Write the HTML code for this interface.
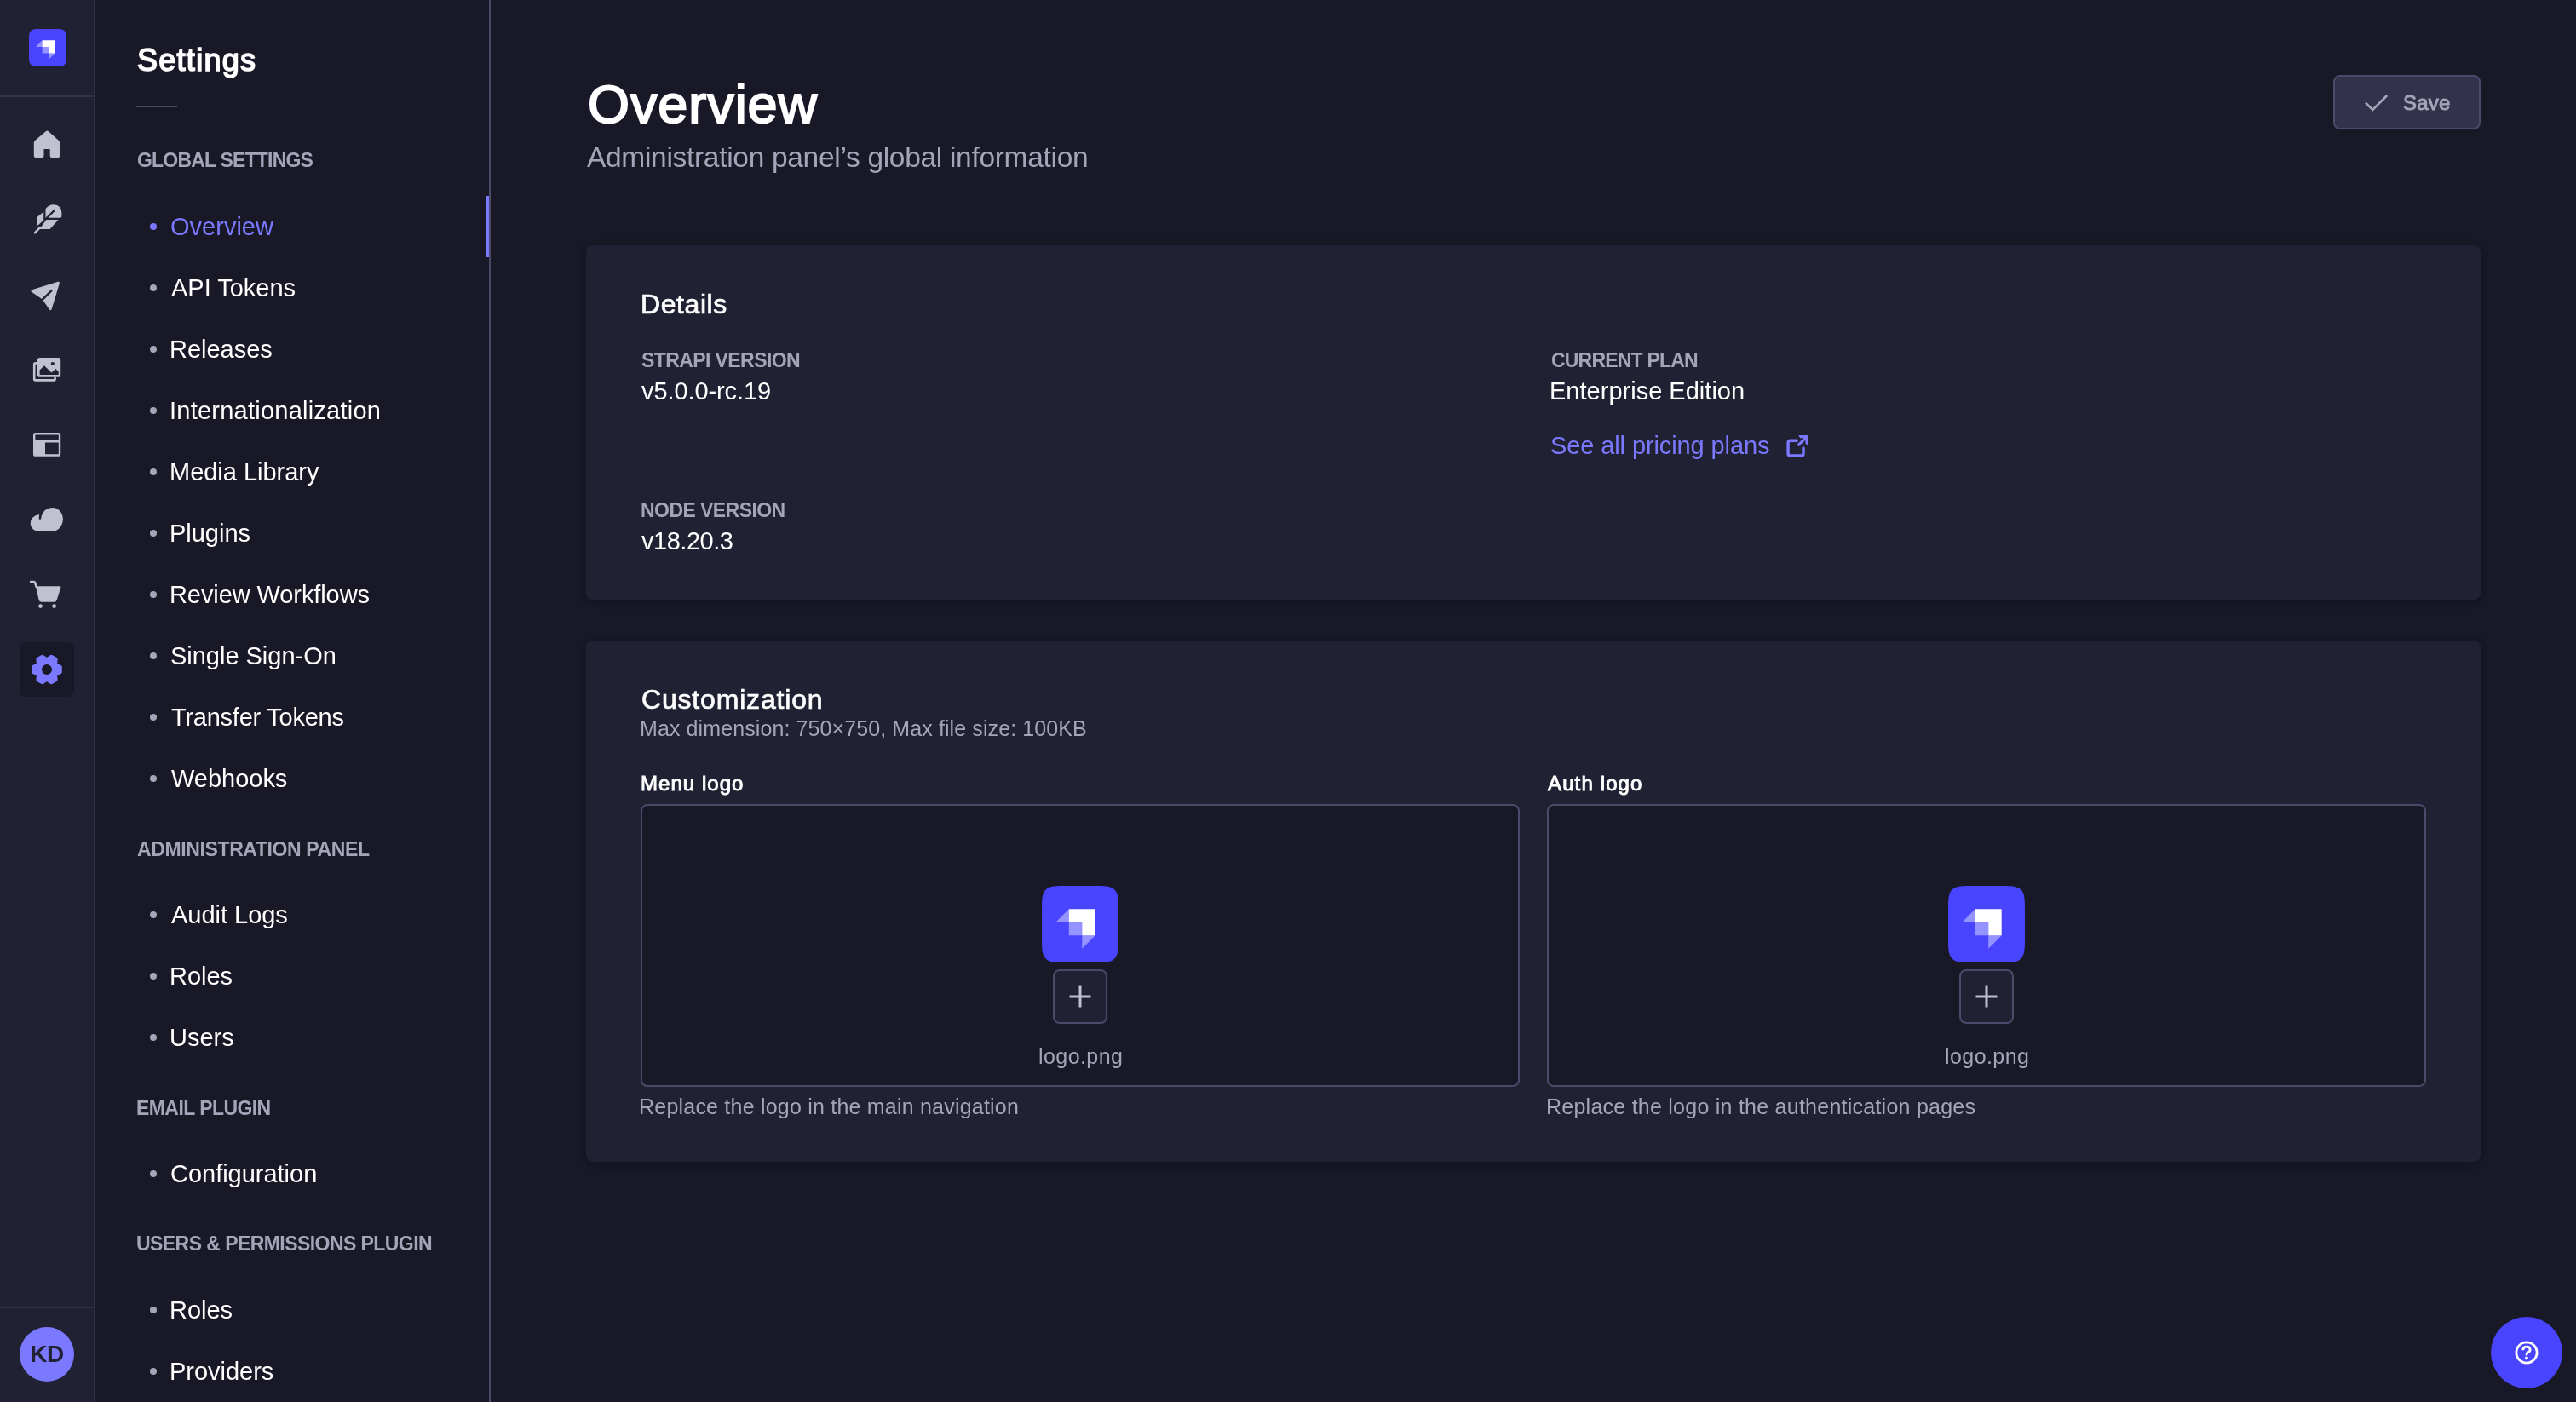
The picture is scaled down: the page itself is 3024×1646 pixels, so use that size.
<!DOCTYPE html>
<html><head><meta charset="utf-8"><title>Overview</title>
<style>
html,body{margin:0;padding:0;width:3024px;height:1646px;overflow:hidden;background:#181826;font-family:"Liberation Sans",sans-serif;}
.t{position:absolute;white-space:nowrap;line-height:1;will-change:transform;}
.abs{position:absolute;}
#mainnav{position:absolute;left:0;top:0;width:110px;height:1646px;background:#212134;border-right:2px solid #32324d;}
#subnav{position:absolute;left:112px;top:0;width:462px;height:1646px;background:#181826;border-right:2px solid #4a4a6a;}
.card{position:absolute;background:#212134;border-radius:8px;box-shadow:0 2px 8px rgba(10,10,20,0.35);}
.dot{position:absolute;width:8px;height:8px;border-radius:50%;background:#a5a5ba;}
.drop{position:absolute;box-sizing:border-box;border:2px solid #4a4a6a;border-radius:8px;background:#181826;}
.plus{position:absolute;box-sizing:border-box;width:64px;height:64px;border:2px solid #4a4a6a;border-radius:8px;background:#212134;}
@media (max-width:1600px){html{zoom:0.5;}}
</style></head><body>
<div id="mainnav"></div>
<div id="subnav"></div>
<!-- nav header divider -->
<div class="abs" style="left:0;top:112px;width:110px;height:2px;background:#32324d"></div>
<div class="abs" style="left:0;top:1534px;width:110px;height:2px;background:#32324d"></div>
<!-- logo -->
<svg class="abs" style="left:34px;top:34px" width="44" height="44" viewBox="0 0 32 32"><path fill="#4945FF" d="M0 11.093c0-5.23 0-7.844 1.625-9.468C3.249 0 5.864 0 11.093 0h9.814c5.23 0 7.844 0 9.468 1.625C32 3.249 32 5.864 32 11.093v9.814c0 5.23 0 7.844-1.625 9.468C28.751 32 26.136 32 20.907 32h-9.814c-5.23 0-7.844 0-9.468-1.625C0 28.751 0 26.136 0 20.907v-9.814Z"/><path fill="#fff" d="M11.307 9.707H22.293V20.693H16.8V15.2H11.307Z"/><path fill="#fff" opacity=".42" d="M11.307 9.707V15.2H5.813Z M16.8 20.693H22.293L16.8 26.187Z M11.307 15.2H16.8V20.693H11.307Z"/></svg>
<!-- active settings box -->
<div class="abs" style="left:23px;top:754px;width:64px;height:64px;border-radius:8px;background:#181826"></div>
<svg class="abs" style="left:0;top:0" width="110" height="900" viewBox="0 0 110 900">
<!-- home -->
<path fill="#c0c0cf" d="M55.4 153.5 Q56.2 153.5 57 154.2 L69 165 Q70.2 166.2 70.2 167.8 L70.2 182.6 Q70.2 185.2 67.6 185.2 L61.2 185.2 Q58.7 185.2 58.7 182.6 L58.7 175 L51.5 175 L51.5 182.6 Q51.5 185.2 49 185.2 L42.4 185.2 Q39.8 185.2 39.8 182.6 L39.8 167.8 Q39.8 166.2 41 165 L53.8 154.2 Q54.6 153.5 55.4 153.5Z"/>
<!-- feather -->
<path fill="#c0c0cf" d="M53.5 245.2 Q57.5 240.2 62.8 240.2 Q72.4 240.6 72.4 250 L72.4 254 Q72.4 255.7 70.7 255.7 L53.5 255.7 Z"/>
<path fill="none" stroke="#212134" stroke-width="2.3" stroke-linecap="round" d="M53.6 257.2 L63.8 247"/>
<path fill="#c0c0cf" d="M51.2 248.8 L51.2 258.4 L44.6 264.4 Q43.7 265 43.7 264 L43.7 254.8 Z"/>
<path fill="#c0c0cf" d="M54.3 258 L68.5 258 L58.6 269.1 L46.4 269.1 Z"/>
<path fill="none" stroke="#c0c0cf" stroke-width="2.5" stroke-linecap="round" d="M40.9 273.3 L47 267.2"/>
<!-- send -->
<path fill="#c0c0cf" stroke="#c0c0cf" stroke-width="3" stroke-linejoin="round" d="M68.4 332.2 L37.9 341.6 L51 350.6 L59.2 362.6 Z"/>
<path fill="none" stroke="#212134" stroke-width="2.4" stroke-linecap="round" d="M49.2 352.4 L60.6 341.2"/>
<!-- images -->
<path fill="none" stroke="#c0c0cf" stroke-width="2.6" d="M43.2 426.4 L41.5 426.4 Q40.2 426.4 40.2 427.8 L40.2 445 Q40.2 446.4 41.6 446.4 L63.2 446.4 Q64.6 446.4 64.6 445 L64.6 443"/>
<path fill="#c0c0cf" fill-rule="evenodd" d="M46.6 420 L68.6 420 Q71.2 420 71.2 422.6 L71.2 440.2 Q71.2 442.8 68.6 442.8 L46.6 442.8 Q44 442.8 44 440.2 L44 422.6 Q44 420 46.6 420 Z M46.6 434.4 L46.6 440 L68.7 440 L68.7 436.6 L65.4 433 L60.4 437.4 L52 429.2 Z"/>
<circle cx="61.8" cy="427" r="2.1" fill="#212134"/>
<!-- layout -->
<path fill="#c0c0cf" fill-rule="evenodd" d="M41.6 508 L68.6 508 Q71.2 508 71.2 510.6 L71.2 533.2 Q71.2 535.8 68.6 535.8 L41.6 535.8 Q39 535.8 39 533.2 L39 510.6 Q39 508 41.6 508 Z M41.4 510.6 L41.4 516.8 L68.8 516.8 L68.8 510.6 Z M53 519.4 L53 533.2 L68.8 533.2 L68.8 519.4 Z"/>
<!-- cloud -->
<path fill="#c0c0cf" d="M46.2 604.2 Q45.6 607 45.8 609.6 Q47 610 48 609.4 Q49 600 57.5 596.6 Q66 594 71.4 601.2 Q76 608.5 72.2 616.6 Q68.8 623.6 61 623.9 L45.6 623.9 Q38.6 623.5 36.2 617.5 Q34.6 611.5 38.8 607.2 Q42 604.3 46.2 604.2 Z"/>
<!-- cart -->
<path fill="none" stroke="#c0c0cf" stroke-width="2.6" stroke-linecap="round" stroke-linejoin="round" d="M36.2 683 L39.6 683 Q40.8 683 41.2 684.2 L42.6 689"/>
<path fill="#c0c0cf" d="M42 688.3 L70.6 688.3 Q71.8 688.4 71.4 689.6 L66.8 704.2 Q66 706.8 63.4 706.8 L48.8 706.8 Q46.4 706.8 45.7 704.4 Z"/>
<circle cx="47.5" cy="711.6" r="2.4" fill="#c0c0cf"/><circle cx="63.6" cy="711.6" r="2.4" fill="#c0c0cf"/>
<!-- cog -->
<path fill="#7b79ff" stroke="#7b79ff" stroke-width="4.4" stroke-linejoin="round" d="M70.61 789.03 L70.61 782.97 L64.87 780.30 L65.43 774.00 L60.18 770.97 L55.00 774.60 L49.82 770.97 L44.57 774.00 L45.13 780.30 L39.39 782.97 L39.39 789.03 L45.13 791.70 L44.57 798.00 L49.82 801.03 L55.00 797.40 L60.18 801.03 L65.43 798.00 L64.87 791.70Z"/>
<circle cx="55" cy="786" r="6" fill="#181826"/>
</svg>
<!-- avatar -->
<div class="abs" style="left:23px;top:1558px;width:64px;height:64px;border-radius:50%;background:#7b79ff"></div>
<div class="t" style="left:23px;top:1566px;width:64px;text-align:center;font-size:28px;line-height:48px;font-weight:bold;letter-spacing:-0.5px;color:#212134">KD</div>
<!-- subnav divider -->
<div class="abs" style="left:160px;top:124px;width:48px;height:2px;background:#4a4a6a"></div>
<!-- active indicator -->
<div class="abs" style="left:570px;top:230px;width:4px;height:72px;background:#7b79ff"></div>
<div class="dot" style="left:176px;top:262px;background:#7b79ff"></div>
<div class="dot" style="left:176px;top:334px"></div>
<div class="dot" style="left:176px;top:406px"></div>
<div class="dot" style="left:176px;top:478px"></div>
<div class="dot" style="left:176px;top:550px"></div>
<div class="dot" style="left:176px;top:622px"></div>
<div class="dot" style="left:176px;top:694px"></div>
<div class="dot" style="left:176px;top:766px"></div>
<div class="dot" style="left:176px;top:838px"></div>
<div class="dot" style="left:176px;top:910px"></div>
<div class="dot" style="left:176px;top:1070px"></div>
<div class="dot" style="left:176px;top:1142px"></div>
<div class="dot" style="left:176px;top:1214px"></div>
<div class="dot" style="left:176px;top:1374px"></div>
<div class="dot" style="left:176px;top:1534px"></div>
<div class="dot" style="left:176px;top:1606px"></div>
<!-- save button -->
<div class="abs" style="left:2739px;top:88px;width:173px;height:64px;box-sizing:border-box;border:2px solid #4a4a6a;border-radius:8px;background:#32324d"></div>
<svg class="abs" style="left:0;top:0" width="3024" height="200" viewBox="0 0 3024 200"><path d="M2777 120.6 L2785.3 128.9 L2802.2 112" fill="none" stroke="#a5a5ba" stroke-width="2.7"/></svg>
<!-- cards -->
<div class="card" style="left:688px;top:288px;width:2224px;height:416px"></div>
<div class="card" style="left:688px;top:752px;width:2224px;height:612px"></div>
<!-- ext link icon -->
<svg class="abs" style="left:2090px;top:505px" width="40" height="40" viewBox="2090 505 40 40"><path fill="none" stroke="#7b79ff" stroke-width="3.4" stroke-linecap="round" d="M2109.2 517.2 L2101.7 517.2 Q2099.1 517.2 2099.1 519.8 L2099.1 532.4 Q2099.1 535 2101.7 535 L2114.4 535 Q2117 535 2117 532.4 L2117 526"/><path fill="none" stroke="#7b79ff" stroke-width="3.3" d="M2110.6 523.2 L2120.6 513.2"/><path fill="#7b79ff" d="M2111.3 510.9 L2122.7 510.9 L2122.7 522.3 L2119.5 521.2 L2119.4 514.3 L2113.1 514.3 Z"/></svg>
<!-- dropzones -->
<div class="drop" style="left:752px;top:944px;width:1032px;height:332px"></div>
<div class="drop" style="left:1816px;top:944px;width:1032px;height:332px"></div>
<svg class="abs" style="left:1223px;top:1040px" width="90" height="90" viewBox="0 0 32 32"><path fill="#4945FF" d="M0 11.093c0-5.23 0-7.844 1.625-9.468C3.249 0 5.864 0 11.093 0h9.814c5.23 0 7.844 0 9.468 1.625C32 3.249 32 5.864 32 11.093v9.814c0 5.23 0 7.844-1.625 9.468C28.751 32 26.136 32 20.907 32h-9.814c-5.23 0-7.844 0-9.468-1.625C0 28.751 0 26.136 0 20.907v-9.814Z"/><path fill="#fff" d="M11.307 9.707H22.293V20.693H16.8V15.2H11.307Z"/><path fill="#fff" opacity=".42" d="M11.307 9.707V15.2H5.813Z M16.8 20.693H22.293L16.8 26.187Z M11.307 15.2H16.8V20.693H11.307Z"/></svg>
<svg class="abs" style="left:2287px;top:1040px" width="90" height="90" viewBox="0 0 32 32"><path fill="#4945FF" d="M0 11.093c0-5.23 0-7.844 1.625-9.468C3.249 0 5.864 0 11.093 0h9.814c5.23 0 7.844 0 9.468 1.625C32 3.249 32 5.864 32 11.093v9.814c0 5.23 0 7.844-1.625 9.468C28.751 32 26.136 32 20.907 32h-9.814c-5.23 0-7.844 0-9.468-1.625C0 28.751 0 26.136 0 20.907v-9.814Z"/><path fill="#fff" d="M11.307 9.707H22.293V20.693H16.8V15.2H11.307Z"/><path fill="#fff" opacity=".42" d="M11.307 9.707V15.2H5.813Z M16.8 20.693H22.293L16.8 26.187Z M11.307 15.2H16.8V20.693H11.307Z"/></svg>
<div class="plus" style="left:1236px;top:1138px"></div>
<div class="plus" style="left:2300px;top:1138px"></div>
<svg class="abs" style="left:0;top:1130px" width="3024" height="80" viewBox="0 1130 3024 80"><path stroke="#c0c0cf" stroke-width="3" d="M1268 1157.5 V1182.5 M1255.5 1170 H1280.5 M2332 1157.5 V1182.5 M2319.5 1170 H2344.5"/></svg>
<!-- help -->
<div class="abs" style="left:2924px;top:1546px;width:84px;height:84px;border-radius:50%;background:#4945ff"></div>
<svg class="abs" style="left:2924px;top:1546px" width="84" height="84" viewBox="2924 1546 84 84"><circle cx="2966" cy="1588" r="12.1" fill="none" stroke="#fff" stroke-width="2.8"/><path fill="none" stroke="#fff" stroke-width="2.8" d="M2961.8 1585.2 Q2961.8 1581.1 2966 1581.1 Q2970.1 1581.1 2970.1 1584.6 Q2970.1 1586.9 2967.6 1587.9 Q2966 1588.6 2966 1590.4 L2966 1591.2"/><circle cx="2965.9" cy="1594.6" r="2" fill="#fff"/></svg>
<div class="t" style="left:160.80px;top:52.90px;font-size:36px;font-weight:normal;color:#ffffff;letter-spacing:1.275px;-webkit-text-stroke:1.6px #ffffff">Settings</div>
<div class="t" style="left:161.00px;top:177.45px;font-size:23px;font-weight:bold;color:#a5a5ba;letter-spacing:-0.797px">GLOBAL SETTINGS</div>
<div class="t" style="left:161.00px;top:985.95px;font-size:23px;font-weight:bold;color:#a5a5ba;letter-spacing:-0.379px">ADMINISTRATION PANEL</div>
<div class="t" style="left:160.00px;top:1289.65px;font-size:23px;font-weight:bold;color:#a5a5ba;letter-spacing:-0.565px">EMAIL PLUGIN</div>
<div class="t" style="left:160.00px;top:1448.95px;font-size:23px;font-weight:bold;color:#a5a5ba;letter-spacing:-0.562px">USERS &amp; PERMISSIONS PLUGIN</div>
<div class="t" style="left:200.00px;top:251.60px;font-size:29px;font-weight:normal;color:#7b79ff;letter-spacing:0.012px">Overview</div>
<div class="t" style="left:201.00px;top:323.60px;font-size:29px;font-weight:normal;color:#ffffff;letter-spacing:-0.019px">API Tokens</div>
<div class="t" style="left:199.00px;top:395.60px;font-size:29px;font-weight:normal;color:#ffffff;letter-spacing:-0.019px">Releases</div>
<div class="t" style="left:199.00px;top:467.60px;font-size:29px;font-weight:normal;color:#ffffff;letter-spacing:0.236px">Internationalization</div>
<div class="t" style="left:199.00px;top:539.60px;font-size:29px;font-weight:normal;color:#ffffff;letter-spacing:-0.015px">Media Library</div>
<div class="t" style="left:199.00px;top:611.60px;font-size:29px;font-weight:normal;color:#ffffff;letter-spacing:-0.019px">Plugins</div>
<div class="t" style="left:199.00px;top:683.60px;font-size:29px;font-weight:normal;color:#ffffff;letter-spacing:-0.090px">Review Workflows</div>
<div class="t" style="left:200.00px;top:755.60px;font-size:29px;font-weight:normal;color:#ffffff;letter-spacing:-0.019px">Single Sign-On</div>
<div class="t" style="left:201.00px;top:827.60px;font-size:29px;font-weight:normal;color:#ffffff;letter-spacing:-0.238px">Transfer Tokens</div>
<div class="t" style="left:201.00px;top:899.60px;font-size:29px;font-weight:normal;color:#ffffff;letter-spacing:-0.019px">Webhooks</div>
<div class="t" style="left:201.00px;top:1059.60px;font-size:29px;font-weight:normal;color:#ffffff;letter-spacing:-0.019px">Audit Logs</div>
<div class="t" style="left:199.00px;top:1131.60px;font-size:29px;font-weight:normal;color:#ffffff;letter-spacing:-0.019px">Roles</div>
<div class="t" style="left:199.00px;top:1203.60px;font-size:29px;font-weight:normal;color:#ffffff;letter-spacing:-0.019px">Users</div>
<div class="t" style="left:200.00px;top:1363.60px;font-size:29px;font-weight:normal;color:#ffffff;letter-spacing:-0.019px">Configuration</div>
<div class="t" style="left:199.00px;top:1523.60px;font-size:29px;font-weight:normal;color:#ffffff;letter-spacing:-0.019px">Roles</div>
<div class="t" style="left:199.00px;top:1595.60px;font-size:29px;font-weight:normal;color:#ffffff;letter-spacing:-0.019px">Providers</div>
<div class="t" style="left:689.50px;top:91.45px;font-size:63px;font-weight:normal;color:#ffffff;letter-spacing:0.921px;-webkit-text-stroke:2.0px #ffffff">Overview</div>
<div class="t" style="left:689.00px;top:167.53px;font-size:33.5px;font-weight:normal;color:#a5a5ba;letter-spacing:-0.306px">Administration panel’s global information</div>
<div class="t" style="left:2821.45px;top:108.60px;font-size:24px;font-weight:normal;color:#a5a5ba;letter-spacing:0.248px;-webkit-text-stroke:0.9px #a5a5ba">Save</div>
<div class="t" style="left:752.35px;top:340.80px;font-size:32px;font-weight:normal;color:#ffffff;letter-spacing:0.581px;-webkit-text-stroke:0.7px #ffffff">Details</div>
<div class="t" style="left:753.00px;top:411.95px;font-size:23px;font-weight:bold;color:#a5a5ba;letter-spacing:-0.588px">STRAPI VERSION</div>
<div class="t" style="left:1821.00px;top:411.85px;font-size:23px;font-weight:bold;color:#a5a5ba;letter-spacing:-0.803px">CURRENT PLAN</div>
<div class="t" style="left:752.00px;top:588.45px;font-size:23px;font-weight:bold;color:#a5a5ba;letter-spacing:-0.559px">NODE VERSION</div>
<div class="t" style="left:753.00px;top:445.35px;font-size:29px;font-weight:normal;color:#ffffff;letter-spacing:-0.091px">v5.0.0-rc.19</div>
<div class="t" style="left:1819.00px;top:445.05px;font-size:29px;font-weight:normal;color:#ffffff;letter-spacing:0.013px">Enterprise Edition</div>
<div class="t" style="left:753.00px;top:620.85px;font-size:29px;font-weight:normal;color:#ffffff;letter-spacing:-0.475px">v18.20.3</div>
<div class="t" style="left:1820.00px;top:509.35px;font-size:29px;font-weight:normal;color:#7b79ff;letter-spacing:-0.102px">See all pricing plans</div>
<div class="t" style="left:752.85px;top:805.10px;font-size:32px;font-weight:normal;color:#ffffff;letter-spacing:0.821px;-webkit-text-stroke:0.7px #ffffff">Customization</div>
<div class="t" style="left:751.00px;top:842.75px;font-size:25px;font-weight:normal;color:#a5a5ba;letter-spacing:0.099px">Max dimension: 750×750, Max file size: 100KB</div>
<div class="t" style="left:752.45px;top:907.60px;font-size:24px;font-weight:normal;color:#ffffff;letter-spacing:1.046px;-webkit-text-stroke:0.9px #ffffff">Menu logo</div>
<div class="t" style="left:1817.45px;top:907.80px;font-size:24px;font-weight:normal;color:#ffffff;letter-spacing:1.129px;-webkit-text-stroke:0.9px #ffffff">Auth logo</div>
<div class="t" style="left:1218.50px;top:1228.35px;font-size:25px;font-weight:normal;color:#a5a5ba;letter-spacing:0.426px">logo.png</div>
<div class="t" style="left:2282.50px;top:1228.35px;font-size:25px;font-weight:normal;color:#a5a5ba;letter-spacing:0.426px">logo.png</div>
<div class="t" style="left:750.40px;top:1287.00px;font-size:25px;font-weight:normal;color:#a5a5ba;letter-spacing:0.213px">Replace the logo in the main navigation</div>
<div class="t" style="left:1815.00px;top:1287.00px;font-size:25px;font-weight:normal;color:#a5a5ba;letter-spacing:0.246px">Replace the logo in the authentication pages</div>
</body></html>
